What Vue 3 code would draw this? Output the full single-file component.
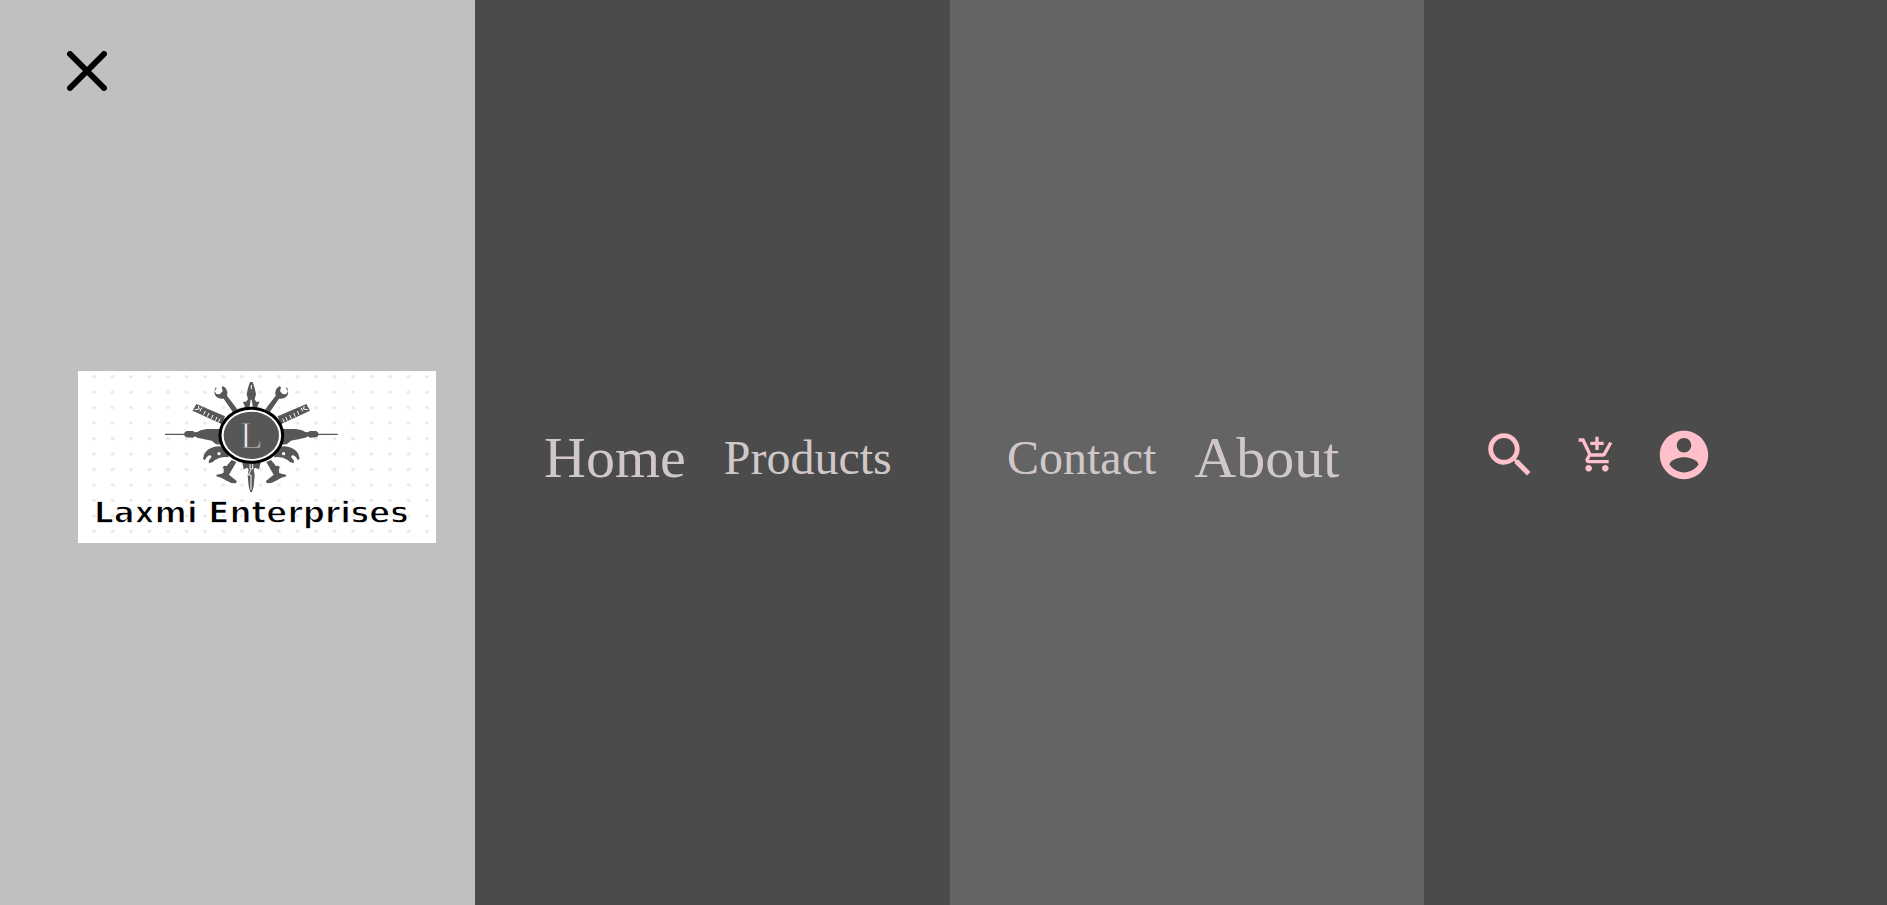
<script setup>
const columns = Array.from({ length: 19 }, (_, i) => 72 + i * 55.5)
const rows = Array.from({ length: 11 }, (_, i) => 50 + i * 46.4)
const sides = ['', 'translate(1088 0) scale(-1 1)']
</script>

<template>
  <nav class="menu" aria-label="Main">
    <section class="panel brand">
      <button class="close" type="button" aria-label="Close menu">
        <svg viewBox="0 0 40 40"><path d="M3 3 37 37M37 3 3 37" /></svg>
      </button>
      <a class="logo" href="#" aria-label="Laxmi Enterprises">
        <svg viewBox="24 33 1074 516">
          <rect x="24" y="33" width="1074" height="516" fill="#fff" />
          <g fill="#ebebeb">
            <template v-for="y in rows" :key="y">
              <ellipse v-for="x in columns" :key="x" :cx="x" :cy="y" rx="6" ry="5" />
            </template>
          </g>
          <g v-for="side in sides" :key="side" :transform="side" fill="#575757">
            <path d="M285 221h58v-3l6-5h20l5 4 8-1 10-5 18-4h45v47l-17-1-13-11-25-5-18-4-8-4-5 4-20-1-6-5v-2h-58z" />
            <path d="M379 132 465 169 456 193 368 152z" />
            <path d="m375 149 13-2-3-9M390 154l5-11" fill="none" stroke="#fff" stroke-width="3" />
            <path d="m401 164 5-11m6 17 5-11m7 17 5-11m7 17 5-11m4 16 5-11" stroke="#fff" stroke-width="3" />
            <path d="M437 82q-8 18 2 28 9 8 22 6l28 41 13-9-31-41q5-18-11-28l-5 2 3 13-9 9-10-1-5-8 6-9z" />
            <path d="M468 263q-25-9-45 1-21 8-24 33l6 3q5-12 15-15l5 5-9 12 1 8q12-1 18-10 18-12 41-8z" />
            <circle cx="447" cy="281" r="5" fill="#fff" />
            <path d="M485 300l14 6-22 38 24 20-4 6q-17 0-30-9-13-9-28-12l1-5q11-1 20-5l2-12-4-4 4-6 8 1z" />
          </g>
          <g fill="#575757">
            <path d="M540 66h8l6 18 4 19-4 15 5 7h10l-6 12-2 15h-11l-5-33h-3l-5 33h-11l-2-15-6-12h10l6-7-4-15 4-19z" />
            <path d="M517 308h55l-5 20-13-5-3 6 3 16-3 34-5 17h-5l-5-17-3-34 3-16-4-6-11 5z" />
          </g>
          <path d="M544 75v13M540 312v15h8v-15M543 330l-8 15h8v44" fill="none" stroke="#fff" stroke-width="3" />
          <ellipse cx="544" cy="226" rx="94" ry="81" fill="#fff" stroke="#000" stroke-width="9" />
          <ellipse cx="544" cy="226" rx="83" ry="71" fill="#575757" />
          <text class="initial" x="544" y="264" text-anchor="middle">L</text>
          <text class="name" x="544" y="490" text-anchor="middle">Laxmi Enterprises</text>
        </svg>
      </a>
    </section>

    <section class="panel first">
      <a class="large" href="#">Home</a>
      <a href="#">Products</a>
    </section>

    <section class="panel second">
      <a href="#">Contact</a>
      <a class="large" href="#">About</a>
    </section>

    <section class="panel tools">
      <button type="button" aria-label="Search">
        <svg class="big" viewBox="0 0 24 24"><path d="M15.5 14h-.79l-.28-.27C15.41 12.59 16 11.11 16 9.5 16 5.91 13.09 3 9.5 3S3 5.91 3 9.5 5.91 16 9.5 16c1.61 0 3.09-.59 4.23-1.57l.27.28v.79l5 4.99L20.49 19l-4.99-5zm-6 0C7.01 14 5 11.99 5 9.5S7.01 5 9.5 5 14 7.01 14 9.5 11.99 14 9.5 14z" /></svg>
      </button>
      <button type="button" aria-label="Add to cart">
        <svg class="small" viewBox="0 0 24 24"><path d="M11 9h2V6h3V4h-3V1h-2v3H8v2h3v3zm-4 9c-1.1 0-1.99.9-1.99 2S5.9 22 7 22s2-.9 2-2-.9-2-2-2zm10 0c-1.1 0-1.99.9-1.99 2s.89 2 1.99 2 2-.9 2-2-.9-2-2-2zm-9.83-3.25.03-.12.9-1.63h7.45c.75 0 1.41-.41 1.75-1.03l3.86-7.01L19.42 4h-.01l-1.1 2-2.76 5H8.53l-.13-.27L6.16 6l-.95-2-.94-2H1v2h2l3.6 7.59-1.35 2.45c-.16.28-.25.61-.25.96 0 1.1.9 2 2 2h12v-2H7.42c-.13 0-.25-.11-.25-.25z" /></svg>
      </button>
      <button type="button" aria-label="Account">
        <svg class="big" viewBox="0 0 24 24"><path d="M12 2C6.48 2 2 6.48 2 12s4.48 10 10 10 10-4.48 10-10S17.52 2 12 2zm0 3c1.66 0 3 1.34 3 3s-1.34 3-3 3-3-1.34-3-3 1.34-3 3-3zm0 14.2c-2.5 0-4.71-1.28-6-3.22.03-1.99 4-3.08 6-3.08 1.99 0 5.97 1.09 6 3.08-1.29 1.94-3.5 3.22-6 3.22z" /></svg>
      </button>
    </section>
  </nav>
</template>

<style>
body {
  margin: 0;
}
</style>

<style scoped>
.menu {
  display: grid;
  grid-template-columns: 475fr 475fr 474fr 463fr;
  min-height: 100vh;
  font-family: "Liberation Serif", "Times New Roman", serif;
}

.panel {
  position: relative;
  display: flex;
  align-items: center;
  gap: 38px;
  box-sizing: border-box;
  padding-top: 10px;
  background: #4b4b4b;
}

.brand {
  padding-top: 8px;
  padding-left: 78px;
  background: #c0c0c0;
}

.first {
  padding-left: 69px;
}

.second {
  padding-left: 57px;
  background: #646464;
}

.tools {
  padding-top: 4px;
  padding-left: 57px;
}

a {
  color: #d0c8c8;
  font-size: 48px;
  text-decoration: none;
}

a.large {
  font-size: 58px;
}

button {
  padding: 0;
  border: 0;
  background: none;
  cursor: pointer;
}

svg {
  display: block;
}

.close {
  position: absolute;
  top: 51px;
  left: 67px;
}

.close svg {
  width: 40px;
  height: 40px;
  fill: none;
  stroke: #000;
  stroke-width: 6px;
  stroke-linecap: round;
}

.logo svg {
  width: 358px;
  height: 172px;
}

.initial {
  fill: #eee;
  stroke: #575757;
  stroke-width: 3px;
  font-family: "Liberation Serif", serif;
  font-size: 111px;
}

.name {
  fill: #000;
  stroke: #fff;
  stroke-width: 4px;
  font-family: "DejaVu Sans", sans-serif;
  font-size: 93px;
  font-weight: 700;
}

.tools svg {
  fill: #ffc0cb;
}

.big {
  width: 58px;
  height: 58px;
}

.small {
  width: 40px;
  height: 40px;
}
</style>
